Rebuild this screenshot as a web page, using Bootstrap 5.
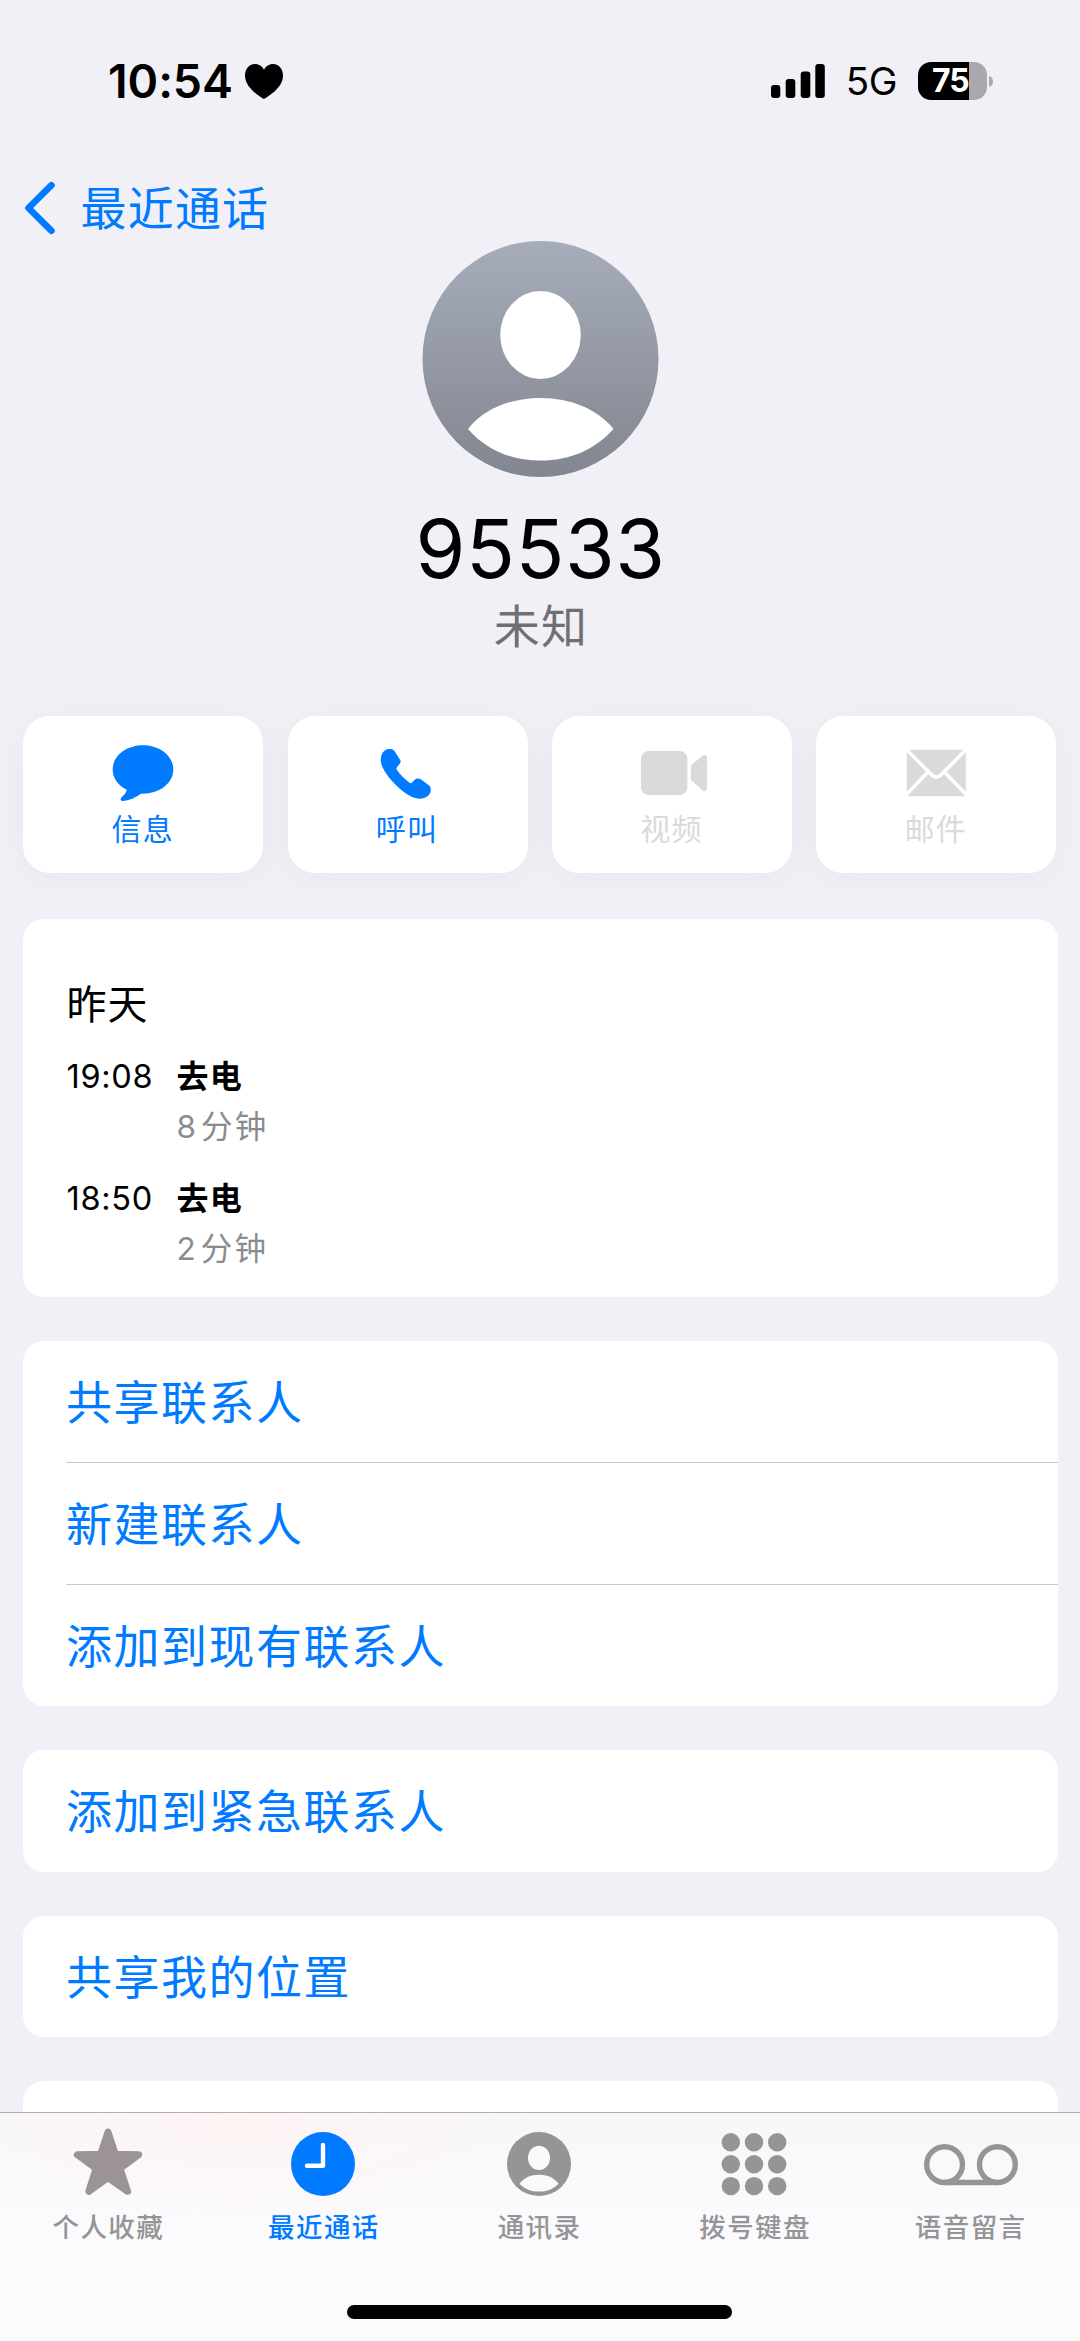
<!DOCTYPE html>
<html lang="zh-CN">
<head>
<meta charset="utf-8">
<meta name="viewport" content="width=device-width, initial-scale=1">
<title>95533</title>
<link href="https://cdn.jsdelivr.net/npm/bootstrap@5.3.0/dist/css/bootstrap.min.css" rel="stylesheet">
<style>
  :root { --ios-blue: #007aff; --ios-bg: #f1f0f6; --ios-gray: #959597; }
  body { font-family: Inter, "Noto Sans CJK SC", sans-serif; background: var(--ios-bg); color: #000; }
  .screen { height: 2341px; }
  svg { display: block; overflow: visible; flex: none; }
  .tint { color: var(--ios-blue); }

  .status { height: 162px; padding: 0 87px 0 108px; }
  .status-left { gap: 12px; }
  .clock-text { font-size: 46.5px; font-weight: 600; letter-spacing: -.1px; line-height: 60px; }
  .net-text { font-size: 38.5px; line-height: 48px; letter-spacing: -.5px; padding: 0 21px 1px 21px; }
  .battery { width: 69px; height: 38px; border-radius: 13px; background: linear-gradient(to right, #000 51px, #a9a8ad 51px); }
  .battery-text { font-size: 32px; font-weight: 700; line-height: 38px; padding-left: 14px; letter-spacing: -1px; }
  .battery-tip { margin-left: 2px; }

  .backbar { height: 79px; padding: 13px 0 0 25px; gap: 25.5px; }
  .link-text { font-size: 46px; letter-spacing: 1.5px; line-height: 60px; }
  .backbar .link-text { letter-spacing: 1.2px; }
  .number { font-size: 80.5px; line-height: 96px; margin: 24px 3px 0 0; letter-spacing: .6px; }
  .subtitle { font-size: 46px; line-height: 58px; letter-spacing: 1.2px; color: #6f6f74; padding: 0 2px 0 0; }

  .actions { gap: 24.4px; padding: 0 23.8px 0 23.2px; margin-top: 60.5px; }
  .action { height: 157.5px; border-radius: 27px; padding-top: 27.5px; box-shadow: 0 5px 34px rgba(40, 40, 50, .045); }
  .action svg { margin-right: 1px; }
  .action-label { font-size: 30px; line-height: 40px; margin-top: 6px; letter-spacing: 1.2px; padding-right: 1px; }
  .off { color: #dadadc; }

  .groups { gap: 44px; padding: 0 22.5px; margin-top: 45.5px; }
  .group { --bs-list-group-bg: #fff; border-radius: 21px; overflow: hidden; background: #fff; flex: none; }
  .group-row { height: 121.8px; padding: 1px 0 0; margin-left: 43.5px; border: 0; background: #fff; color: var(--ios-blue); }
  .group-row + .group-row { border-top: 1.5px solid #cbcbcd; }
  .history { height: 378px; padding: 60px 44px 0; }
  .day { font-size: 40px; line-height: 52px; letter-spacing: 1px; }
  .calls { padding-top: 24px; }
  .call { height: 122.8px; }
  .call-time { width: 110px; font-size: 32.5px; line-height: 44px; letter-spacing: .7px; }
  .call-kind { font-size: 32px; font-weight: 700; line-height: 44px; letter-spacing: 1.2px; }
  .call-length { font-size: 31.5px; line-height: 44px; letter-spacing: 2.1px; color: #8b8b8f; margin-top: 6px; }
  .call-length span { margin-right: 3px; }

  .tabs { height: 229px; border-top: 1px solid #b1b0b4; padding: 11px 2px 0 0;
    background: radial-gradient(ellipse 350px 110px at 240px 10px, rgba(255, 244, 244, .9), rgba(255, 246, 246, 0)) , linear-gradient(#f7f7f9, #fbfbfd 50%); }
  .tab-item { color: var(--ios-gray); }
  .tab-item.starred { color: #9b9394; }
  .tab-item.current { color: var(--ios-blue); }
  .tab-label { font-size: 26.5px; font-weight: 500; line-height: 36px; letter-spacing: 1.4px; margin-top: 5px; padding-left: 1px; }
  .starred .tab-label { color: var(--ios-gray); }
  .home-bar { width: 385px; height: 14px; border-radius: 7px; background: #000; margin-top: 60px; }
</style>
</head>
<body>
<div class="screen d-flex flex-column overflow-hidden">

  <header class="flex-shrink-0">
    <div class="status d-flex align-items-center justify-content-between">
      <div class="status-left d-flex align-items-center">
        <span class="clock-text">10:54</span>
        <svg width="38" height="35" viewBox="0 0 38 35"><path d="M19 35C16 33 0 24.500 0 11.500C0 4.500 4.500 0 10 0C14 0 17.300 2.200 19 5.800C20.700 2.200 24 0 28 0C33.500 0 38 4.500 38 11.500C38 24.500 22 33 19 35Z"/></svg>
      </div>
      <div class="d-flex align-items-center">
        <svg width="54" height="34" viewBox="0 0 54 34"><rect y="21" width="9.300" height="13" rx="3"/><rect x="14.700" y="15" width="9.600" height="19" rx="3"/><rect x="29.700" y="7.500" width="9.600" height="26.500" rx="3"/><rect x="44.300" width="9.500" height="34" rx="3"/></svg>
        <span class="net-text">5G</span>
        <div class="battery"><div class="battery-text text-white">75</div></div>
        <svg class="battery-tip" width="4" height="11" viewBox="0 0 4 11"><path d="M0 0C2.500 .500 4 3 4 5.500S2.500 10.500 0 11Z" fill="#a9a8ad"/></svg>
      </div>
    </div>
    <nav class="backbar d-flex align-items-center tint">
      <svg width="30" height="52" viewBox="0 0 30 52" fill="none" stroke="currentColor" stroke-width="6.600" stroke-linecap="round" stroke-linejoin="round"><path d="M26.500 3.200L3.500 26L26.500 48.800"/></svg>
      <span class="link-text">最近通话</span>
    </nav>
  </header>

  <main class="flex-grow-1 overflow-hidden d-flex flex-column" style="min-height:0">
    <section class="d-flex flex-column align-items-center flex-shrink-0 ps-1">
      <svg width="236" height="236" viewBox="1.500 0 236 236">
        <defs><linearGradient id="sky" x1="0" y1="0" x2="0" y2="1"><stop offset="0" stop-color="#a6acba"/><stop offset="1" stop-color="#828690"/></linearGradient></defs>
        <circle cx="118" cy="118" r="118" fill="url(#sky)"/>
        <ellipse cx="118" cy="94" rx="40.300" ry="44" fill="#fff"/>
        <path d="M45.500 188C61 168 88 157 118 157S175 168 191 188C172 209 147 219.500 118 219.500S64 209 45.500 188Z" fill="#fff"/>
      </svg>
      <div class="number">95533</div>
      <div class="subtitle">未知</div>
    </section>

    <section class="actions d-flex flex-shrink-0">
      <div class="action bg-white d-flex flex-column align-items-center col tint">
        <svg width="64" height="60" viewBox="0 0 64 60" fill="currentColor"><path d="M32 2.300C48.800 2.300 62.300 13 62.300 26.500S48.800 51.200 30 50.700C25 54 18 58 11.500 58C9.500 58 9 56 10.500 54.500C13.500 51.500 15.500 49.500 15.700 46.800C7 42.500 1.700 35 1.700 26.500C1.700 13 15.200 2.300 32 2.300Z"/></svg>
        <span class="action-label">信息</span>
      </div>
      <div class="action bg-white d-flex flex-column align-items-center col tint">
        <svg width="64" height="60" viewBox="0 0 64 60" fill="currentColor"><path d="M5.800 17C5.800 11 9 6 14 6C16.500 6 18.200 6.300 19.300 7.800L25.200 17C26 18.500 25.800 19.500 24.500 21L22 24.300C21.200 25.500 21.300 26 22 27C25.500 32 30 36.500 34.500 39.700C35.500 40.300 36.200 40.300 37 39.600L40 36.500C41.500 35.200 43.800 35 45.800 36.300L53.500 42C55.300 43.300 55.800 44.800 55.800 47C55.800 52 51 55.700 44.400 55.700C36 55.700 25 47 17 38C10.500 30.500 5.800 23 5.800 17Z"/></svg>
        <span class="action-label">呼叫</span>
      </div>
      <div class="action bg-white d-flex flex-column align-items-center col off">
        <svg width="64" height="60" viewBox="0 0 64 60" fill="currentColor"><rect x="2" y="8" width="46.400" height="44" rx="7.500"/><path d="M51.900 24.500C51.900 22.800 52.300 22 53.600 21L63.500 12.800C65.500 11.200 68 12 68 14.500V45.500C68 48 65.500 48.800 63.500 47.200L53.600 38.500C52.300 37.400 51.900 36.500 51.900 35Z"/></svg>
        <span class="action-label">视频</span>
      </div>
      <div class="action bg-white d-flex flex-column align-items-center col off">
        <svg width="64" height="60" viewBox="0 0 64 60"><rect x="2.800" y="6.700" width="59" height="46.500" rx="2.500" fill="currentColor"/><path d="M1.500 5.500L27.500 31.800Q32.300 36.600 37.100 31.800L63 5.500M24 29L1.500 52.500M40.500 29L63 52.500" fill="none" stroke="#fff" stroke-width="3.600"/></svg>
        <span class="action-label">邮件</span>
      </div>
    </section>

    <section class="groups d-flex flex-column flex-shrink-0">
      <div class="group history">
        <div class="day">昨天</div>
        <div class="calls">
          <div class="call d-flex">
            <div class="call-time">19:08</div>
            <div><div class="call-kind">去电</div><div class="call-length"><span>8</span>分钟</div></div>
          </div>
          <div class="call d-flex">
            <div class="call-time">18:50</div>
            <div><div class="call-kind">去电</div><div class="call-length"><span>2</span>分钟</div></div>
          </div>
        </div>
      </div>
      <div class="group list-group">
        <a class="group-row list-group-item d-flex align-items-center link-text">共享联系人</a>
        <a class="group-row list-group-item d-flex align-items-center link-text">新建联系人</a>
        <a class="group-row list-group-item d-flex align-items-center link-text">添加到现有联系人</a>
      </div>
      <div class="group list-group"><a class="group-row list-group-item d-flex align-items-center link-text">添加到紧急联系人</a></div>
      <div class="group list-group"><a class="group-row list-group-item d-flex align-items-center link-text">共享我的位置</a></div>
      <div class="group list-group"><div class="group-row"></div></div>
    </section>
  </main>

  <footer class="tabs flex-shrink-0">
    <div class="d-flex text-center">
      <div class="tab-item starred d-flex flex-column align-items-center col">
        <svg width="100" height="80" viewBox="0 0 100 80"><path d="M50 8L57.300 30.300L80.700 30.700L62 44.300L69.600 67.300L50 53.700L30.800 67.300L38.200 44.300L19.300 30.700L42.700 30.300Z" fill="currentColor" stroke="currentColor" stroke-width="7" stroke-linejoin="round"/></svg>
        <span class="tab-label">个人收藏</span>
      </div>
      <div class="tab-item current d-flex flex-column align-items-center col">
        <svg width="100" height="80" viewBox="0 0 100 80"><circle cx="50" cy="40" r="32" fill="currentColor"/><path d="M50 21V41.800H34" fill="none" stroke="#fff" stroke-width="4.400" stroke-linecap="round" stroke-linejoin="round"/></svg>
        <span class="tab-label">最近通话</span>
      </div>
      <div class="tab-item d-flex flex-column align-items-center col">
        <svg width="100" height="80" viewBox="0 0 100 80"><circle cx="50" cy="40" r="32" fill="currentColor"/><ellipse cx="50" cy="33.900" rx="11" ry="12.200" fill="#fafafb"/><path d="M30.500 59.700C34.500 54 41.500 50.700 50 50.700S65.500 54 69.500 59.700C64.500 65 58 67.600 50 67.600S35.500 65 30.500 59.700Z" fill="#fafafb"/></svg>
        <span class="tab-label">通讯录</span>
      </div>
      <div class="tab-item d-flex flex-column align-items-center col">
        <svg width="100" height="80" viewBox="1 0 100 80" fill="currentColor"><circle cx="26.800" cy="18.300" r="9.200"/><circle cx="50" cy="18.300" r="9.200"/><circle cx="73.200" cy="18.300" r="9.200"/><circle cx="26.800" cy="40.200" r="9.200"/><circle cx="50" cy="40.200" r="9.200"/><circle cx="73.200" cy="40.200" r="9.200"/><circle cx="26.800" cy="62.100" r="9.200"/><circle cx="50" cy="62.100" r="9.200"/><circle cx="73.200" cy="62.100" r="9.200"/></svg>
        <span class="tab-label">拨号键盘</span>
      </div>
      <div class="tab-item d-flex flex-column align-items-center col">
        <svg width="100" height="80" viewBox="-1 0 100 80" fill="none" stroke="currentColor" stroke-width="5.400"><circle cx="23.600" cy="40.600" r="17.900"/><circle cx="76.400" cy="40.600" r="17.900"/><path d="M23.600 58.500H76.400"/></svg>
        <span class="tab-label">语音留言</span>
      </div>
    </div>
    <div class="home-bar mx-auto"></div>
  </footer>
</div>
<script src="https://cdn.jsdelivr.net/npm/bootstrap@5.3.0/dist/js/bootstrap.bundle.min.js"></script>
</body>
</html>
